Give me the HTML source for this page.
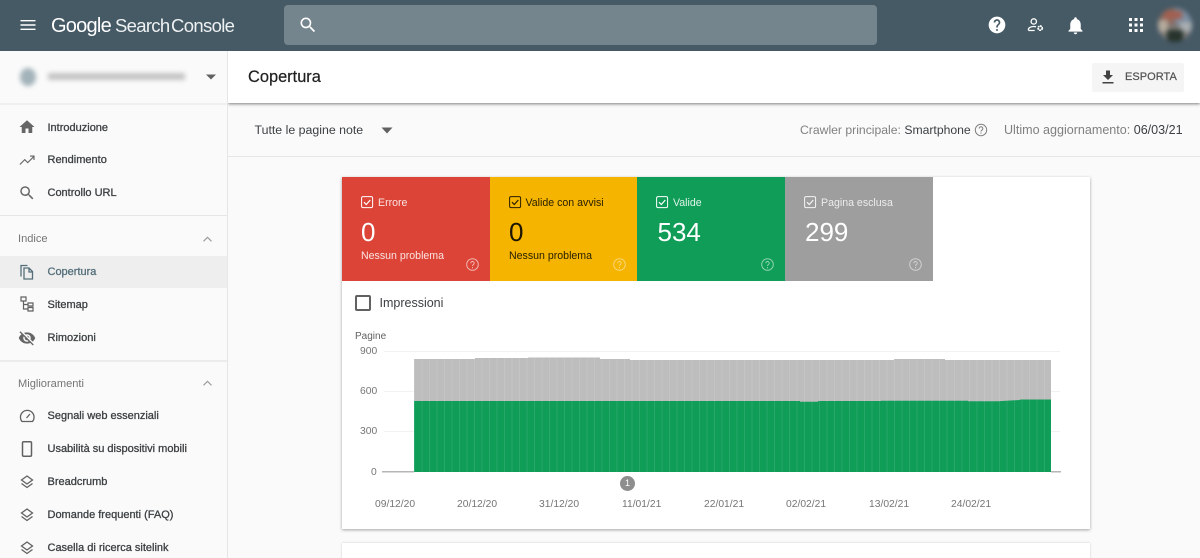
<!DOCTYPE html>
<html lang="it"><head><meta charset="utf-8"><title>Copertura</title>
<style>
*{box-sizing:border-box}
html,body{margin:0;width:1200px;height:558px;overflow:hidden;background:#fafafa;font-family:"Liberation Sans",sans-serif;color:#202124}
#root{position:absolute;left:0;top:0;width:1200px;height:558px;overflow:hidden;background:#fafafa}
.a{position:absolute}
.t{position:absolute;white-space:nowrap;line-height:16px}
.n{position:absolute;left:47.5px;white-space:nowrap;font-size:11px;line-height:14px;color:#3c4043;-webkit-text-stroke:.3px #3c4043}
.h{position:absolute;left:18px;white-space:nowrap;font-size:11.1px;line-height:14px;color:#757575}
.i{position:absolute;left:18px;width:18px;height:18px;fill:#666}
.st{position:absolute;font-size:10.6px;line-height:14px;white-space:nowrap}
.num{position:absolute;font-size:26px;line-height:30px;white-space:nowrap}
.ax{position:absolute;font-size:10.3px;line-height:12px;color:#757575;white-space:nowrap}
</style></head><body><div id="root">

<div class="a" style="left:0;top:0;width:1200px;height:51px;background:#465a66"></div>
<svg class="a" style="left:19px;top:17px" width="18" height="16" viewBox="0 0 18 16"><path fill="#fff" d="M1.5 3h15v1.4h-15zM1.5 7.3h15v1.4h-15zM1.5 11.6h15V13h-15z"/></svg>
<div class="t" style="left:51px;top:14px;font-size:20px;line-height:24px;color:#fff;letter-spacing:-.75px">Google</div>
<div class="t" style="left:115px;top:14px;font-size:18.5px;line-height:24px;color:#eef1f2;letter-spacing:-.7px">Search</div>
<div class="t" style="left:171px;top:14px;font-size:18.5px;line-height:24px;color:#eef1f2;letter-spacing:-.65px">Console</div>
<div class="a" style="left:284px;top:5px;width:593px;height:40px;border-radius:4px;background:#74858e"></div>
<svg class="a" style="left:298px;top:15px" width="20" height="20" viewBox="0 0 24 24"><path fill="#fff" d="M15.5 14h-.79l-.28-.27A6.471 6.471 0 0 0 16 9.5 6.5 6.5 0 1 0 9.5 16c1.61 0 3.09-.59 4.23-1.57l.27.28v.79l5 4.99L20.49 19l-4.99-5zm-6 0C7.01 14 5 11.99 5 9.5S7.01 5 9.5 5 14 7.01 14 9.5 11.99 14 9.5 14z"/></svg>
<svg class="a" style="left:987px;top:15px" width="20" height="20" viewBox="0 0 24 24"><path fill="#fff" d="M12 2C6.48 2 2 6.48 2 12s4.48 10 10 10 10-4.48 10-10S17.52 2 12 2zm1 17h-2v-2h2v2zm2.07-7.75l-.9.92C13.45 12.9 13 13.5 13 15h-2v-.5c0-1.1.45-2.1 1.170-2.830l1.240-1.260c.370-.360.590-.860.590-1.410 0-1.100-.900-2-2-2s-2 .900-2 2H8c0-2.210 1.790-4 4-4s4 1.790 4 4c0 .880-.360 1.680-.930 2.250z"/></svg>
<svg class="a" style="left:1027px;top:17px" width="18" height="16" viewBox="0 0 20 18" fill="none" stroke="#fff" stroke-width="1.500"><circle cx="7.500" cy="5" r="3"/><path d="M1.500 15v-1c0-2 3-3.300 6-3.300 1 0 1.800.1 2.500.4M1.500 15.200h7"/><circle cx="14.700" cy="12.500" r="2.300" stroke-width="2" stroke-dasharray="2 .6"/></svg>
<svg class="a" style="left:1065px;top:15px" width="21" height="21" viewBox="0 0 24 24"><path fill="#fff" d="M12 22c1.100 0 2-.9 2-2h-4c0 1.100.9 2 2 2zm6-6v-5c0-3.070-1.640-5.640-4.500-6.320V4a1.500 1.500 0 0 0-3 0v.68C7.630 5.360 6 7.920 6 11v5l-2 2v1h16v-1l-2-2z"/></svg>
<svg class="a" style="left:1129px;top:18px" width="14" height="14" viewBox="0 0 14 14" fill="#fff"><rect x="0" y="0" width="3" height="3"/><rect x="5.500" y="0" width="3" height="3"/><rect x="11" y="0" width="3" height="3"/><rect x="0" y="5.500" width="3" height="3"/><rect x="5.500" y="5.500" width="3" height="3"/><rect x="11" y="5.500" width="3" height="3"/><rect x="0" y="11" width="3" height="3"/><rect x="5.500" y="11" width="3" height="3"/><rect x="11" y="11" width="3" height="3"/></svg>
<div class="a" style="left:1158px;top:8px;width:34px;height:34px;border-radius:50%;overflow:hidden;background:#7d7a78;filter:blur(2.5px)">
<div class="a" style="left:0;top:0;width:17px;height:17px;background:#8a6a5e"></div>
<div class="a" style="left:17px;top:0;width:17px;height:16px;background:#7b8ea3"></div>
<div class="a" style="left:6px;top:3px;width:18px;height:8px;background:#a35f50"></div>
<div class="a" style="left:0;top:12px;width:10px;height:12px;background:#b5aa9c"></div>
<div class="a" style="left:22px;top:14px;width:12px;height:10px;background:#a9aeb1"></div>
<div class="a" style="left:9px;top:22px;width:16px;height:12px;background:#27332c"></div>
</div>

<div class="a" style="left:0;top:51px;width:228px;height:507px;background:#fafafa;border-right:1px solid #e6e6e6"></div>
<div class="a" style="left:20px;top:68px;width:16px;height:18px;border-radius:50%;background:#a3b3ba;filter:blur(2.5px)"></div>
<div class="a" style="left:48px;top:73px;width:137px;height:7px;background:#c4c4c4;filter:blur(2.5px)"></div>
<svg class="a" style="left:206px;top:74px" width="10" height="6"><path fill="#616161" d="M0 .5h10L5 5.500z"/></svg>
<div class="a" style="left:0;top:103px;width:227px;height:2px;background:#efefef"></div>

<svg class="i" style="top:118px" viewBox="0 0 24 24"><path d="M10 20v-6h4v6h5v-8h3L12 3 2 12h3v8z"/></svg>
<div class="n" style="top:121px">Introduzione</div>
<svg class="i" style="top:151px" viewBox="0 0 24 24" fill="none"><path fill="none" stroke="#616161" stroke-width="1.500" d="M2.500 18l6.500-6.500 4 4L21 7.500M16 6.800h5.300V12"/></svg>
<div class="n" style="top:153px">Rendimento</div>
<svg class="i" style="top:184px" viewBox="0 0 24 24"><path d="M15.500 14h-.79l-.28-.27A6.471 6.471 0 0 0 16 9.5 6.500 6.500 0 1 0 9.500 16c1.610 0 3.090-.59 4.230-1.570l.27.28v.79l5 4.990L20.490 19l-4.990-5zm-6 0C7.010 14 5 11.990 5 9.500S7.010 5 9.500 5 14 7.010 14 9.500 11.990 14 9.500 14z"/></svg>
<div class="n" style="top:186px">Controllo URL</div>
<div class="a" style="left:0;top:215px;width:227px;height:1px;background:#e6e6e6"></div>
<div class="h" style="top:232px">Indice</div>
<svg class="a" style="left:203px;top:236px" width="9" height="6" fill="none"><path stroke="#9a9a9a" stroke-width="1.100" d="M.5 5.300l4-4 4 4"/></svg>
<div class="a" style="left:0;top:256px;width:227px;height:32px;background:#eeeeee"></div>
<svg class="i" style="top:263px;fill:none" viewBox="0 0 18 18"><path fill="none" stroke="#546e7a" stroke-width="1.300" d="M3 13.500V2.500h6.500M6 5h5l3.500 3.500V16H6zM11 5v4h3.500"/></svg>
<div class="n" style="top:265px;color:#546e7a;-webkit-text-stroke-color:#546e7a">Copertura</div>
<svg class="i" style="top:295px;fill:none" viewBox="0 0 18 18"><path fill="none" stroke="#616161" stroke-width="1.200" d="M3 2h5v4H3zM10 8h5v3h-5zM10 12.500h5v3.500h-5zM5.500 6v8H10M5.500 9.500H10"/></svg>
<div class="n" style="top:298px">Sitemap</div>
<svg class="i" style="top:329px" viewBox="0 0 24 24"><path d="M12 7c2.760 0 5 2.240 5 5 0 .65-.13 1.260-.36 1.830l2.920 2.920c1.510-1.260 2.700-2.890 3.430-4.750-1.730-4.390-6-7.500-11-7.500-1.400 0-2.740.25-3.980.7l2.160 2.160C10.740 7.130 11.350 7 12 7zM2 4.270l2.280 2.280.46.46C3.080 8.300 1.780 10.020 1 12c1.730 4.390 6 7.500 11 7.500 1.550 0 3.030-.3 4.380-.84l.42.42L19.730 22 21 20.730 3.270 3 2 4.270zM7.530 9.800l1.550 1.550c-.05.21-.08.43-.08.65 0 1.660 1.340 3 3 3 .22 0 .44-.03.65-.08l1.550 1.550c-.67.33-1.410.53-2.200.53-2.760 0-5-2.240-5-5 0-.79.2-1.530.53-2.200zm4.310-.78l3.150 3.150.02-.16c0-1.660-1.340-3-3-3l-.17.01z"/></svg>
<div class="n" style="top:331px">Rimozioni</div>
<div class="a" style="left:0;top:360px;width:227px;height:2px;background:#ececec"></div>
<div class="h" style="top:377px">Miglioramenti</div>
<svg class="a" style="left:203px;top:380px" width="9" height="6" fill="none"><path stroke="#9a9a9a" stroke-width="1.100" d="M.5 5.300l4-4 4 4"/></svg>
<svg class="i" style="top:407px;fill:none" viewBox="0 0 18 18"><path fill="none" stroke="#616161" stroke-width="1.300" d="M4 14.500h10.500a6.800 6.800 0 1 0-10.500 0zM8.500 11l3.500-4"/></svg>
<div class="n" style="top:409px">Segnali web essenziali</div>
<svg class="i" style="top:440px;fill:none" viewBox="0 0 18 18"><rect x="4.500" y="1.800" width="9" height="14.400" rx="1.200" fill="none" stroke="#616161" stroke-width="1.500"/></svg>
<div class="n" style="top:442px">Usabilità su dispositivi mobili</div>
<svg class="i" style="top:473px;fill:none" viewBox="0 0 18 18"><path fill="none" stroke="#616161" stroke-width="1.300" d="M9 3l5.500 4L9 11 3.500 7zM3.500 10.500L9 14.500l5.500-4"/></svg>
<div class="n" style="top:475px">Breadcrumb</div>
<svg class="i" style="top:506px;fill:none" viewBox="0 0 18 18"><path fill="none" stroke="#616161" stroke-width="1.300" d="M9 3l5.500 4L9 11 3.500 7zM3.500 10.500L9 14.500l5.500-4"/></svg>
<div class="n" style="top:508px">Domande frequenti (FAQ)</div>
<svg class="i" style="top:539px;fill:none" viewBox="0 0 18 18"><path fill="none" stroke="#616161" stroke-width="1.300" d="M9 3l5.500 4L9 11 3.500 7zM3.500 10.500L9 14.500l5.500-4"/></svg>
<div class="n" style="top:541px">Casella di ricerca sitelink</div>

<div class="a" style="left:228px;top:51px;width:972px;height:52px;background:#fff;box-shadow:0 1px 3px rgba(0,0,0,.5);clip-path:inset(0 0 -6px 0)"></div>
<div class="t" style="left:248px;top:68px;font-size:16.4px;line-height:19px;color:#212121;-webkit-text-stroke:.2px #212121">Copertura</div>
<div class="a" style="left:1092px;top:63px;width:92px;height:29px;background:#f5f5f5;border-radius:2px"></div>
<svg class="a" style="left:1099px;top:68px" width="18" height="18" viewBox="0 0 18 18"><path fill="#424242" d="M14 7h-3V2.500H7V7H4l5 5zM3.500 14h11v1.500h-11z"/></svg>
<div class="t" style="left:1125px;top:70px;font-size:11px;line-height:15px;letter-spacing:.05px;color:#505050;-webkit-text-stroke:.2px #505050">ESPORTA</div>

<div class="t" style="left:254.500px;top:122px;font-size:12.350px;color:#3c4043">Tutte le pagine note</div>
<svg class="a" style="left:381px;top:127px" width="12" height="7"><path fill="#616161" d="M.5.500h11L6 6.500z"/></svg>
<div class="t" style="left:800px;top:122px;font-size:12.200px;color:#808080">Crawler principale: <span style="color:#3c4043">Smartphone</span></div>
<svg class="a" style="left:974px;top:123px" width="14" height="14" viewBox="0 0 14 14" fill="none"><circle cx="7" cy="7" r="5.700" stroke="#808080"/><path stroke="#808080" d="M5.200 5.600a1.800 1.800 0 1 1 2.700 1.500c-.6.400-.9.700-.9 1.500M7 9.500v1.200"/></svg>
<div class="t" style="left:1004px;top:122px;font-size:12.550px;color:#808080">Ultimo aggiornamento: <span style="color:#3c4043">06/03/21</span></div>
<div class="a" style="left:228px;top:156px;width:972px;height:1px;background:#e6e6e6"></div>

<div class="a" style="left:342px;top:177px;width:748px;height:352px;background:#fff;box-shadow:0 1px 3px rgba(0,0,0,.35)"></div>
<div class="a" style="left:342px;top:543px;width:748px;height:20px;background:#fff;box-shadow:0 0 2px rgba(0,0,0,.2)"></div>
<div class="a" style="left:342px;top:177px;width:148px;height:104px;background:#db4437"></div>
<div class="a" style="left:490px;top:177px;width:147px;height:104px;background:#f4b400"></div>
<div class="a" style="left:637px;top:177px;width:148px;height:104px;background:#0f9d58"></div>
<div class="a" style="left:785px;top:177px;width:148px;height:104px;background:#9e9e9e"></div>

<svg class="a" style="left:361px;top:196px;color:#fff" width="13" height="13" fill="none" stroke="#fff"><rect x=".6" y=".6" width="11" height="11" rx="1.500"/><path stroke-width="1.200" d="M3 6.200l2.300 2.300L9.300 4"/></svg>
<div class="st" style="left:378px;top:196px;color:#fbe3e1">Errore</div>
<div class="num" style="left:361px;top:217px;color:#fff">0</div>
<div class="st" style="left:361px;top:249px;color:#fbe3e1">Nessun problema</div>
<svg class="a" style="left:466px;top:258px" width="13" height="13" fill="none" stroke="#f3b5af"><circle cx="6.500" cy="6.500" r="5.800"/><path d="M4.800 5.200a1.700 1.700 0 1 1 2.600 1.400c-.6.400-.9.700-.9 1.400M6.500 9v1.200"/></svg>

<svg class="a" style="left:509px;top:196px" width="13" height="13" fill="none" stroke="#2a2000"><rect x=".6" y=".6" width="11" height="11" rx="1.500"/><path stroke-width="1.200" d="M3 6.200l2.300 2.300L9.300 4"/></svg>
<div class="st" style="left:525.500px;top:196px;color:#2a2000">Valide con avvisi</div>
<div class="num" style="left:509px;top:217px;color:#1c1500">0</div>
<div class="st" style="left:509px;top:249px;color:#2a2000">Nessun problema</div>
<svg class="a" style="left:613px;top:258px" width="13" height="13" fill="none" stroke="#f9d674"><circle cx="6.500" cy="6.500" r="5.800"/><path d="M4.800 5.200a1.700 1.700 0 1 1 2.600 1.400c-.6.400-.9.700-.9 1.400M6.500 9v1.200"/></svg>

<svg class="a" style="left:656px;top:196px" width="13" height="13" fill="none" stroke="#fff"><rect x=".6" y=".6" width="11" height="11" rx="1.500"/><path stroke-width="1.200" d="M3 6.200l2.300 2.300L9.300 4"/></svg>
<div class="st" style="left:673px;top:196px;color:#dff3e8">Valide</div>
<div class="num" style="left:657.500px;top:217px;color:#fff">534</div>
<svg class="a" style="left:761px;top:258px" width="13" height="13" fill="none" stroke="#8fd3b0"><circle cx="6.500" cy="6.500" r="5.800"/><path d="M4.800 5.200a1.700 1.700 0 1 1 2.600 1.400c-.6.400-.9.700-.9 1.400M6.500 9v1.200"/></svg>

<svg class="a" style="left:804px;top:196px" width="13" height="13" fill="none" stroke="#f5f5f5"><rect x=".6" y=".6" width="11" height="11" rx="1.500"/><path stroke-width="1.200" d="M3 6.200l2.300 2.300L9.300 4"/></svg>
<div class="st" style="left:821px;top:196px;color:#ececec">Pagina esclusa</div>
<div class="num" style="left:805px;top:217px;color:#fff">299</div>
<svg class="a" style="left:909px;top:258px" width="13" height="13" fill="none" stroke="#cfcfcf"><circle cx="6.500" cy="6.500" r="5.800"/><path d="M4.800 5.200a1.700 1.700 0 1 1 2.600 1.400c-.6.400-.9.700-.9 1.400M6.500 9v1.200"/></svg>

<div class="a" style="left:355px;top:295px;width:16px;height:16px;border:2px solid #616161;border-radius:2px"></div>
<div class="t" style="left:379.500px;top:295px;font-size:12.500px;color:#3c4043">Impressioni</div>

<div class="t" style="left:355px;top:329px;font-size:10px;color:#616161">Pagine</div>
<div class="ax" style="left:360px;top:346px">900</div>
<div class="ax" style="left:360px;top:386px">600</div>
<div class="ax" style="left:360px;top:426px">300</div>
<div class="ax" style="left:371px;top:467px">0</div>

<svg class="a" style="left:380px;top:345px" width="690" height="140" viewBox="380 345 690 140">
<defs><pattern id="p" x="414" y="0" width="7.500" height="200" patternUnits="userSpaceOnUse"><rect width="1" height="200" fill="#fff" fill-opacity=".1"/></pattern></defs>
<path stroke="#f2f2f2" fill="none" d="M384 351.500h676M384 391.500h676M384 431.500h676"/>
<path fill="#bdbdbd" d="M414 359h61v-1h53v-.5h72v1.500h30v1h264v-1h51v1h106v112H414z"/>
<path fill="#0f9d58" d="M414 401h386v.7h18v-.7h63v-.3h87v.6h30l22-1.300v-.5h31V472H414z"/>
<rect x="414" y="358" width="637" height="114" fill="url(#p)"/>
<path stroke="#9e9e9e" stroke-width="1.200" fill="none" d="M382 471.800h32M1051 471.800h10"/>
</svg>
<div class="a" style="left:620px;top:476px;width:15px;height:15px;border-radius:50%;background:#8e8e8e;color:#fff;font-size:9px;line-height:15px;text-align:center">1</div>
<div class="ax" style="left:375px;top:499px">09/12/20</div>
<div class="ax" style="left:457px;top:499px">20/12/20</div>
<div class="ax" style="left:539px;top:499px">31/12/20</div>
<div class="ax" style="left:622px;top:499px">11/01/21</div>
<div class="ax" style="left:704px;top:499px">22/01/21</div>
<div class="ax" style="left:786px;top:499px">02/02/21</div>
<div class="ax" style="left:869px;top:499px">13/02/21</div>
<div class="ax" style="left:951px;top:499px">24/02/21</div>
</div></body></html>
